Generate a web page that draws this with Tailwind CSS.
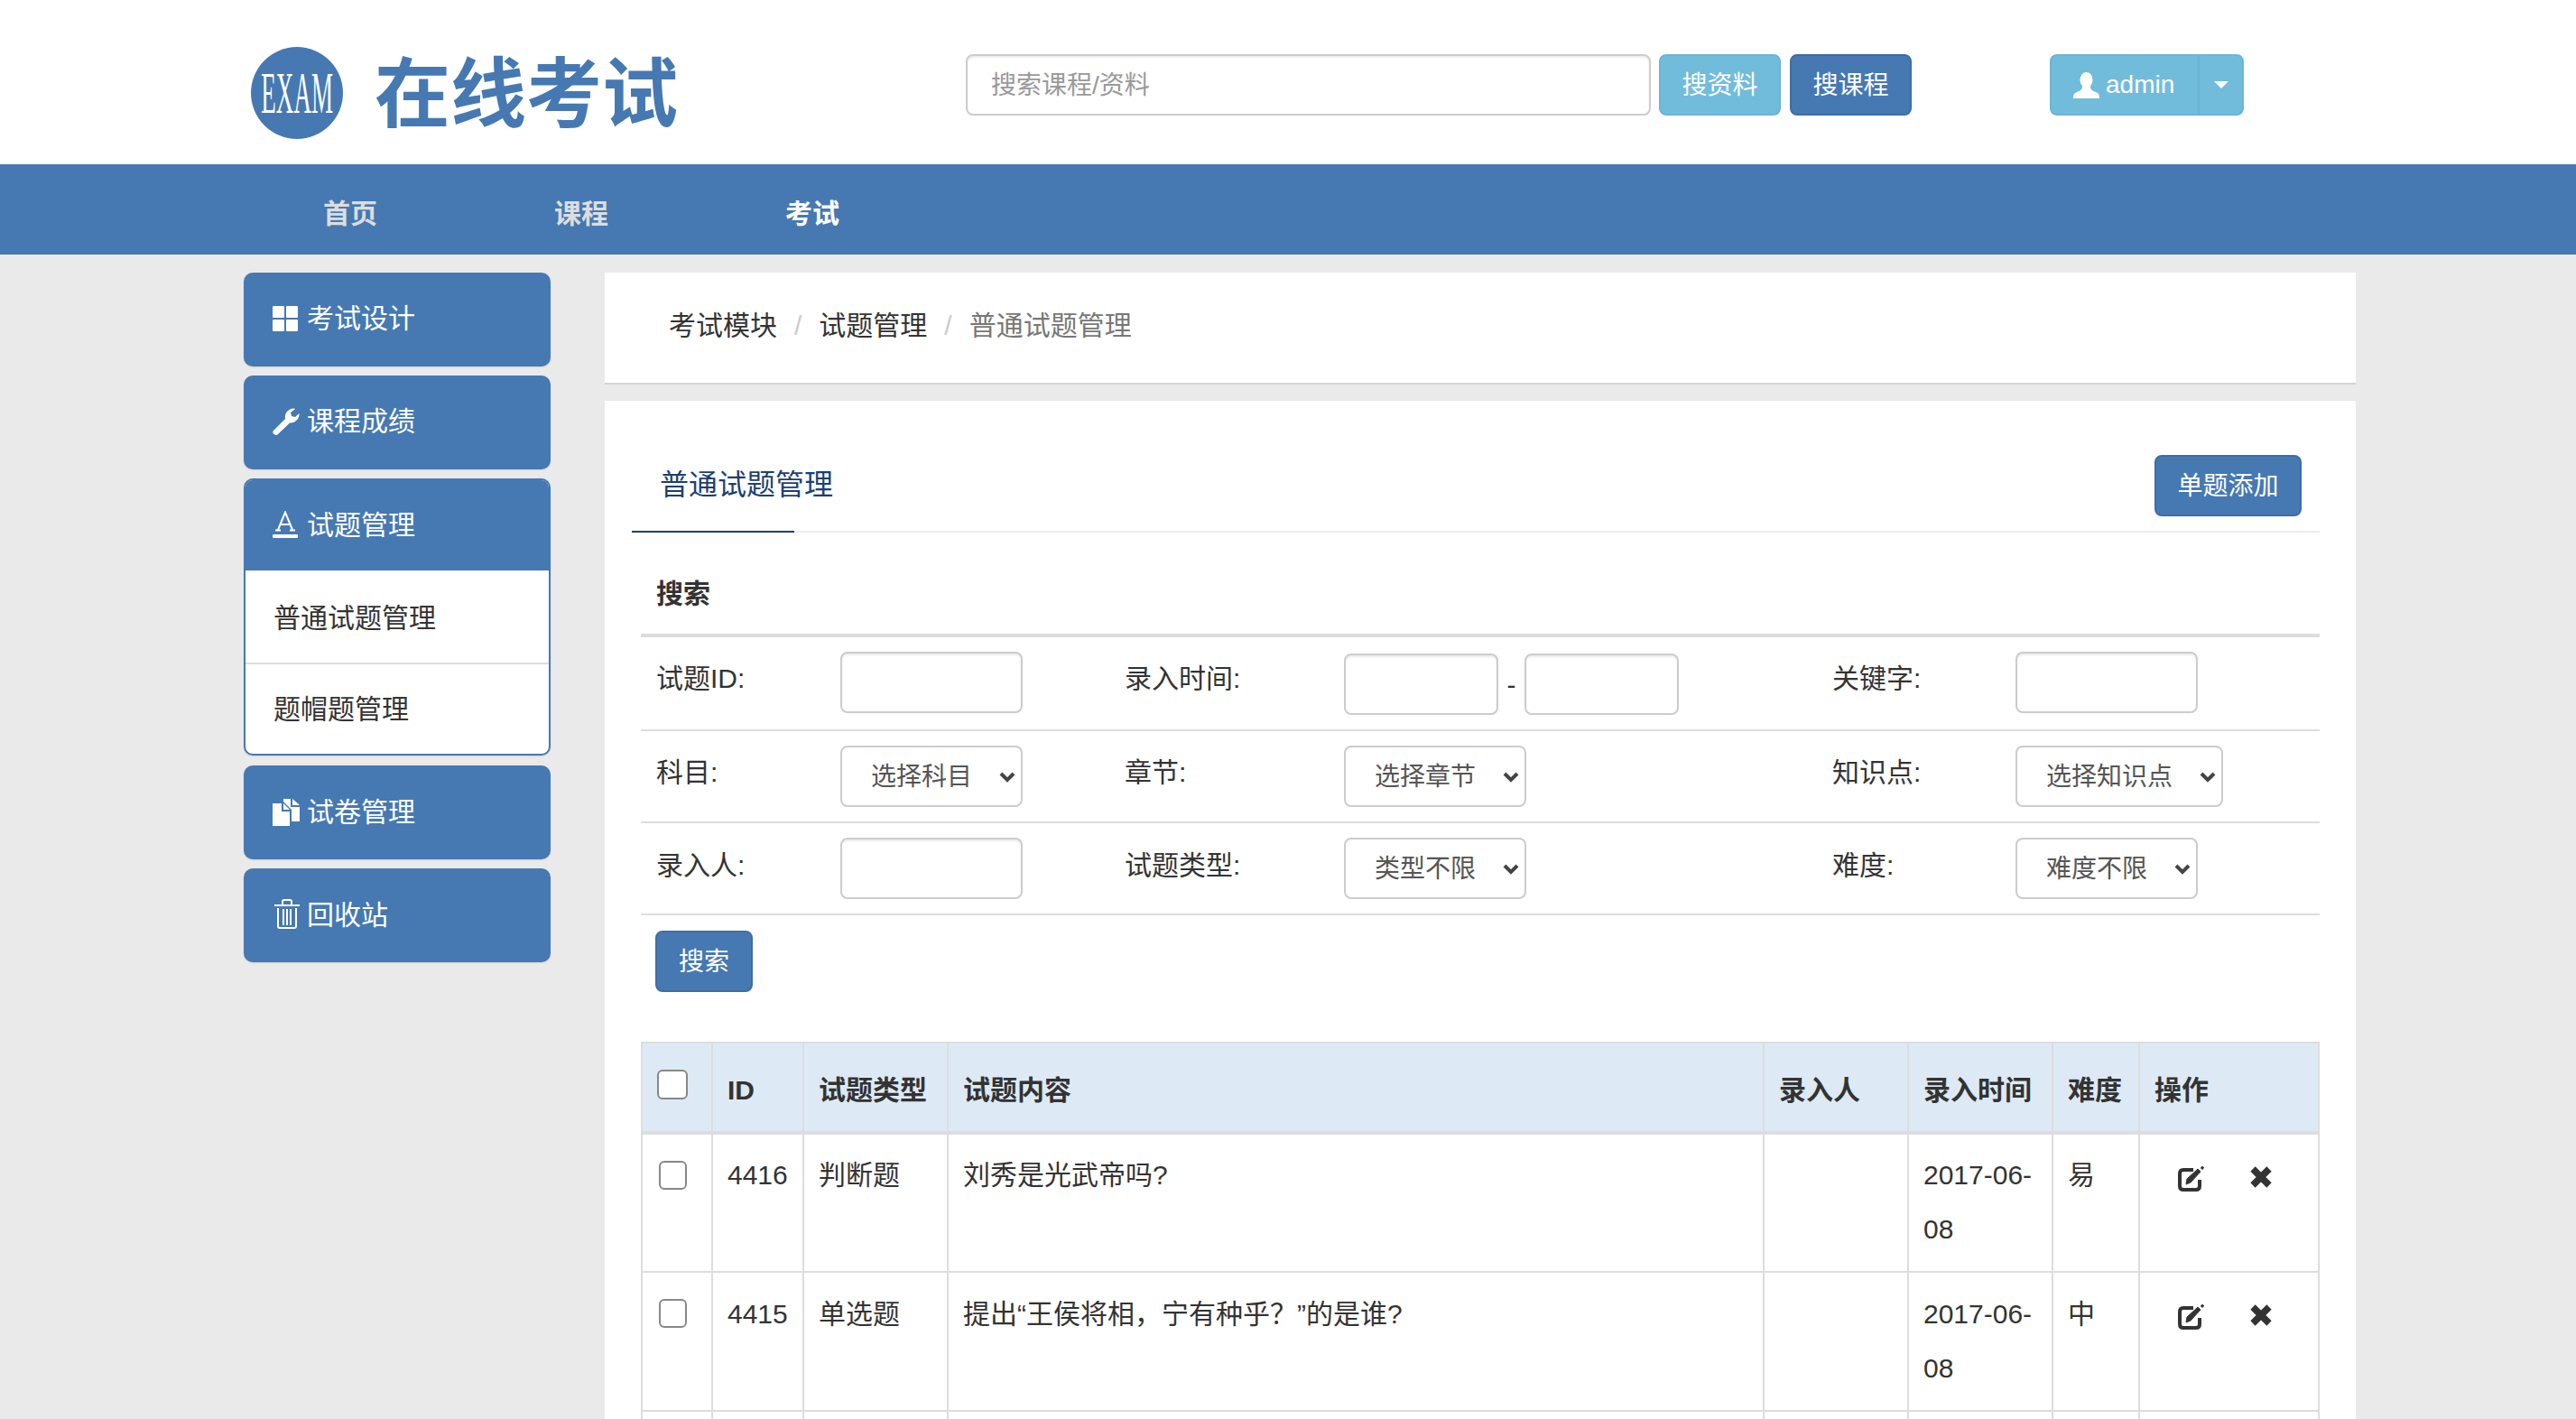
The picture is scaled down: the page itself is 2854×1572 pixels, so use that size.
<!DOCTYPE html>
<html lang="zh-CN">
<head>
  <meta charset="UTF-8" />
  <title>在线考试</title>
  <script src="https://cdn.jsdelivr.net/npm/@tailwindcss/browser@4"></script>
</head>
<body class="w-[2854px] h-[1572px] overflow-hidden bg-[#eaeaea] text-[#333] text-[30px] font-['Liberation_Sans','Noto_Sans_CJK_SC',sans-serif]">

  <!-- header -->
  <header class="h-[182px] bg-white flex items-center pl-[278px]">
    <div class="w-[102px] h-[102px] mt-[24px] rounded-full bg-[#4679b2] flex items-center justify-center overflow-hidden">
      <span class="text-white text-[66px] leading-none scale-x-[0.41] font-['Liberation_Serif','Noto_Serif',serif]">EXAM</span>
    </div>
    <div class="ml-[35px] w-[336px] mt-[28px] text-[84px] leading-none font-bold text-[#4679b2]">在线考试</div>
    <input type="text" placeholder="搜索课程/资料" class="ml-[319px] mt-[6px] w-[759px] h-[68px] px-[26px] pt-[2px] text-[28px] bg-white border-2 border-[#ccc] rounded-[8px] shadow-[inset_0_2px_2px_rgba(0,0,0,0.075)] placeholder:text-[#999]" />
    <button class="ml-[9px] mt-[6px] w-[135px] h-[68px] pt-[2px] rounded-[8px] border-2 border-[#6ab5d7] bg-[#72bcdb] text-white text-[28px]">搜资料</button>
    <button class="ml-[10px] mt-[6px] w-[135px] h-[68px] pt-[2px] rounded-[8px] border-2 border-[#3f6da3] bg-[#4679b2] text-white text-[28px]">搜课程</button>
    <div class="ml-[153px] mt-[6px] flex h-[68px] text-white text-[28px]">
      <button class="w-[164px] flex items-center pl-[24px] rounded-l-[8px] border-2 border-r-0 border-[#6ab5d7] bg-[#72bcdb]">
        <svg class="w-[29px] h-[29px] mr-[7px]" viewBox="0 0 29 29" fill="#fff"><ellipse cx="14.5" cy="8.5" rx="7" ry="8.5"/><path d="M10 15 C10 19 9 20 4 22 C1 23 0 25 0 29 H29 C29 25 28 23 25 22 C20 20 19 19 19 15 Z"/></svg>
        <span>admin</span>
      </button>
      <button class="w-[51px] flex items-center justify-center rounded-r-[8px] border-2 border-[#6ab5d7] bg-[#72bcdb]">
        <svg class="w-[16px] h-[8px]" viewBox="0 0 16 8" fill="#fff"><path d="M0 0 H16 L8 8 Z"/></svg>
      </button>
    </div>
  </header>

  <!-- nav -->
  <nav class="h-[100px] pt-[8px] bg-[#4679b2] flex items-center pl-[260px] text-[30px] font-bold">
    <a class="w-[256px] text-center text-[#ddd]">首页</a>
    <a class="w-[256px] text-center text-[#ddd]">课程</a>
    <a class="w-[256px] text-center text-white">考试</a>
  </nav>

  <div class="flex items-start gap-[60px] pl-[270px] pt-[20px]">

    <!-- sidebar -->
    <aside class="w-[340px] flex flex-col gap-[10px]">
      <a class="h-[104px] pl-[32px] pb-[3px] flex items-center rounded-[10px] bg-[#4679b2] text-white shadow-[0_1px_2px_rgba(0,0,0,0.1)]">
        <svg class="w-[28px] h-[28px] mr-[10px]" viewBox="0 0 28 28" fill="#fff"><rect width="13" height="13" rx="1"/><rect x="15" width="13" height="13" rx="1"/><rect y="15" width="13" height="13" rx="1"/><rect x="15" y="15" width="13" height="13" rx="1"/></svg>
        考试设计
      </a>
      <a class="h-[104px] pl-[32px] pb-[3px] flex items-center rounded-[10px] bg-[#4679b2] text-white shadow-[0_1px_2px_rgba(0,0,0,0.1)]">
        <svg class="w-[30px] h-[30px] mr-[8px]" viewBox="0 0 30 30" fill="#fff"><path d="M1 25 L14 12 C13 6 17 1 23 0.5 C24 0.5 25 1 25 1 L20 5 L21 9 L25 10 L29.5 6 C30 12 25 17 19 16.5 L6 29 C4.5 30.5 2.5 30 1 28.5 C0 27.5 0 26 1 25 Z"/></svg>
        课程成绩
      </a>
      <div class="rounded-[10px] border-2 border-[#4679b2] bg-white shadow-[0_1px_2px_rgba(0,0,0,0.1)] overflow-hidden">
        <a class="h-[100px] pl-[30px] pb-[2px] flex items-center bg-[#4679b2] text-white">
          <svg class="w-[28px] h-[30px] mr-[10px]" viewBox="0 0 28 30"><path d="M6 21 L14 1.5 L22 21 M8.5 15 H19.5 M3 21.5 H9 M19 21.5 H25" fill="none" stroke="#fff" stroke-width="2"/><rect y="26" width="28" height="4" rx="1" fill="#fff"/></svg>
          试题管理
        </a>
        <a class="h-[104px] pl-[31px] pt-[2px] flex items-center border-b-2 border-[#ddd] text-[#333]">普通试题管理</a>
        <a class="h-[99px] pl-[31px] flex items-center text-[#333]">题帽题管理</a>
      </div>
      <a class="h-[104px] mt-[1px] pl-[32px] pb-[1px] flex items-center rounded-[10px] bg-[#4679b2] text-white shadow-[0_1px_2px_rgba(0,0,0,0.1)]">
        <svg class="w-[30px] h-[30px] mr-[8px]" viewBox="0 0 30 30" fill="#fff"><path d="M0 5 H10 V14 H19 V30 H0 Z"/><path d="M12 5 L19 12 H12 Z"/><path d="M12 0 H20 V9 H30 V25 H21 V12 L12 3 Z"/><path d="M22 0 L30 7 H22 Z"/></svg>
        试卷管理
      </a>
      <a class="h-[104px] pl-[32px] pb-[1px] flex items-center rounded-[10px] bg-[#4679b2] text-white shadow-[0_1px_2px_rgba(0,0,0,0.1)]">
        <svg class="w-[28px] h-[33px] ml-[2px] mr-[8px] -mt-[2px]" viewBox="0 0 28 33" fill="none" stroke="#fff" stroke-width="2"><path d="M0 7 H28 M9 6 V3 C9 1.5 10 1 11 1 H17 C18 1 19 1.5 19 3 V6 M4 10 V30 C4 31.5 5 32 6 32 H22 C23 32 24 31.5 24 30 V10 M10 11 V29 M14 11 V29 M18 11 V29"/></svg>
        回收站
      </a>
    </aside>

    <!-- main -->
    <main class="w-[1940px]">
      <div class="h-[124px] pl-[71px] pb-[6px] flex items-center bg-white border-b-2 border-[#d5d5d5]">
        <span>考试模块</span>
        <span class="px-[19px] text-[#ccc]">/</span>
        <span>试题管理</span>
        <span class="px-[19px] text-[#ccc]">/</span>
        <span class="text-[#777]">普通试题管理</span>
      </div>

      <div class="mt-[18px] bg-white h-[1128px] overflow-hidden">
        <div class="relative ml-[30px] mr-[40px] h-[146px] flex justify-between items-end border-b-2 border-[#eee]">
          <div class="w-[180px] h-[146px] pl-[31px] pt-[71px] -mb-[2px] border-b-2 border-[#1c3f72] text-[#1c3f72] text-[32px] leading-[44px] whitespace-nowrap">普通试题管理</div>
          <button class="absolute right-[20px] top-[60px] w-[163px] h-[68px] pt-[2px] rounded-[8px] border-2 border-[#3f6da3] bg-[#4679b2] text-white text-[28px]">单题添加</button>
        </div>

        <div class="mx-[40px]">
          <div class="h-[116px] pl-[17px] pt-[47px] leading-[42px] font-bold border-b-4 border-[#ddd]">搜索</div>

          <div class="h-[104px] pl-[17px] pt-[16px] grid grid-cols-[204px_315px_243px_541px_203px_1fr] items-start border-b-2 border-[#ddd]">
            <label class="mt-[9px] leading-[42px]">试题ID:</label>
            <input type="text" class="w-[202px] h-[68px] bg-white border-2 border-[#ccc] rounded-[8px] shadow-[inset_0_2px_2px_rgba(0,0,0,0.075)]" />
            <label class="mt-[9px] leading-[42px]">录入时间:</label>
            <div class="mt-[2px] flex items-center">
              <input type="text" class="w-[171px] h-[68px] bg-white border-2 border-[#ccc] rounded-[8px] shadow-[inset_0_2px_2px_rgba(0,0,0,0.075)]" />
              <span class="w-[29px] text-center">-</span>
              <input type="text" class="w-[171px] h-[68px] bg-white border-2 border-[#ccc] rounded-[8px] shadow-[inset_0_2px_2px_rgba(0,0,0,0.075)]" />
            </div>
            <label class="mt-[9px] leading-[42px]">关键字:</label>
            <input type="text" class="w-[202px] h-[68px] bg-white border-2 border-[#ccc] rounded-[8px] shadow-[inset_0_2px_2px_rgba(0,0,0,0.075)]" />
          </div>

          <div class="h-[102px] pl-[17px] pt-[16px] grid grid-cols-[204px_315px_243px_541px_203px_1fr] items-start border-b-2 border-[#ddd]">
            <label class="mt-[9px] leading-[42px]">科目:</label>
            <div class="relative w-[202px]">
              <select class="appearance-none w-full h-[68px] pl-[32px] pt-[2px] text-[28px] text-[#555] bg-white border-2 border-[#ccc] rounded-[8px]"><option>选择科目</option></select>
              <svg class="absolute right-[8px] top-[29px] w-[18px] h-[12px] pointer-events-none" viewBox="0 0 18 12" fill="none" stroke="#444" stroke-width="4"><path d="M2 2 L9 9 L16 2"/></svg>
            </div>
            <label class="mt-[9px] leading-[42px]">章节:</label>
            <div class="relative w-[202px]">
              <select class="appearance-none w-full h-[68px] pl-[32px] pt-[2px] text-[28px] text-[#555] bg-white border-2 border-[#ccc] rounded-[8px]"><option>选择章节</option></select>
              <svg class="absolute right-[8px] top-[29px] w-[18px] h-[12px] pointer-events-none" viewBox="0 0 18 12" fill="none" stroke="#444" stroke-width="4"><path d="M2 2 L9 9 L16 2"/></svg>
            </div>
            <label class="mt-[9px] leading-[42px]">知识点:</label>
            <div class="relative w-[230px]">
              <select class="appearance-none w-full h-[68px] pl-[32px] pt-[2px] text-[28px] text-[#555] bg-white border-2 border-[#ccc] rounded-[8px]"><option>选择知识点</option></select>
              <svg class="absolute right-[8px] top-[29px] w-[18px] h-[12px] pointer-events-none" viewBox="0 0 18 12" fill="none" stroke="#444" stroke-width="4"><path d="M2 2 L9 9 L16 2"/></svg>
            </div>
          </div>

          <div class="h-[102px] pl-[17px] pt-[16px] grid grid-cols-[204px_315px_243px_541px_203px_1fr] items-start border-b-2 border-[#ddd]">
            <label class="mt-[10px] leading-[42px]">录入人:</label>
            <input type="text" class="w-[202px] h-[68px] bg-white border-2 border-[#ccc] rounded-[8px] shadow-[inset_0_2px_2px_rgba(0,0,0,0.075)]" />
            <label class="mt-[10px] leading-[42px]">试题类型:</label>
            <div class="relative w-[202px]">
              <select class="appearance-none w-full h-[68px] pl-[32px] pt-[2px] text-[28px] text-[#555] bg-white border-2 border-[#ccc] rounded-[8px]"><option>类型不限</option></select>
              <svg class="absolute right-[8px] top-[29px] w-[18px] h-[12px] pointer-events-none" viewBox="0 0 18 12" fill="none" stroke="#444" stroke-width="4"><path d="M2 2 L9 9 L16 2"/></svg>
            </div>
            <label class="mt-[10px] leading-[42px]">难度:</label>
            <div class="relative w-[202px]">
              <select class="appearance-none w-full h-[68px] pl-[32px] pt-[2px] text-[28px] text-[#555] bg-white border-2 border-[#ccc] rounded-[8px]"><option>难度不限</option></select>
              <svg class="absolute right-[8px] top-[29px] w-[18px] h-[12px] pointer-events-none" viewBox="0 0 18 12" fill="none" stroke="#444" stroke-width="4"><path d="M2 2 L9 9 L16 2"/></svg>
            </div>
          </div>

          <button class="ml-[16px] mt-[17px] w-[108px] h-[68px] pt-[2px] rounded-[8px] border-2 border-[#3f6da3] bg-[#4679b2] text-white text-[28px]">搜索</button>

          <table class="mt-[55px] w-[1860px] table-fixed border-collapse leading-[60px]">
            <colgroup>
              <col class="w-[78px]" /><col class="w-[101px]" /><col class="w-[160px]" /><col class="w-[904px]" /><col class="w-[160px]" /><col class="w-[160px]" /><col class="w-[96px]" /><col />
            </colgroup>
            <thead>
              <tr class="h-[100px] bg-[#ddeaf6]">
                <th class="border-2 border-b-4 border-[#ddd] align-top pl-[16px] pt-[29px] text-left"><input type="checkbox" class="block appearance-none w-[34px] h-[33px] bg-white border-2 border-[#888] rounded-[6px]" /></th>
                <th class="border-2 border-b-4 border-[#ddd] align-bottom px-[16px] pb-[15px] text-left">ID</th>
                <th class="border-2 border-b-4 border-[#ddd] align-bottom px-[16px] pb-[15px] text-left">试题类型</th>
                <th class="border-2 border-b-4 border-[#ddd] align-bottom px-[16px] pb-[15px] text-left">试题内容</th>
                <th class="border-2 border-b-4 border-[#ddd] align-bottom px-[16px] pb-[15px] text-left">录入人</th>
                <th class="border-2 border-b-4 border-[#ddd] align-bottom px-[16px] pb-[15px] text-left">录入时间</th>
                <th class="border-2 border-b-4 border-[#ddd] align-bottom px-[16px] pb-[15px] text-left">难度</th>
                <th class="border-2 border-b-4 border-[#ddd] align-bottom px-[16px] pb-[15px] text-left">操作</th>
              </tr>
            </thead>
            <tbody>
              <tr class="h-[154px]">
                <td class="border-2 border-[#ddd] align-top pl-[18px] pt-[29px]"><input type="checkbox" class="block appearance-none w-[31px] h-[32px] bg-white border-2 border-[#888] rounded-[6px]" /></td>
                <td class="border-2 border-[#ddd] align-top px-[16px] py-[15px]">4416</td>
                <td class="border-2 border-[#ddd] align-top px-[16px] py-[15px]">判断题</td>
                <td class="border-2 border-[#ddd] align-top px-[16px] py-[15px]">刘秀是光武帝吗?</td>
                <td class="border-2 border-[#ddd] align-top px-[16px] py-[15px]"></td>
                <td class="border-2 border-[#ddd] align-top px-[16px] py-[15px]">2017-06-08</td>
                <td class="border-2 border-[#ddd] align-top px-[16px] py-[15px]">易</td>
                <td class="border-2 border-[#ddd] align-top pl-[42px] pt-[35px]">
                  <div class="flex items-start gap-[50px]">
                    <svg class="w-[29px] h-[28px]" viewBox="0 0 29 28" fill="none" stroke="#333"><path d="M17 4 H6 C3.5 4 2 5.5 2 8 V22 C2 24.5 3.5 26 6 26 H20 C22.5 26 24 24.5 24 22 V15" stroke-width="4"/><path d="M9 20 L10 14 L22 3 L25 6 L14 18 Z" fill="#333" stroke-width="1"/><path d="M26 3 L28 0.5" stroke-width="3"/></svg>
                    <svg class="w-[26px] h-[24px]" viewBox="0 0 26 24" fill="none" stroke="#333" stroke-width="7.5"><path d="M4 3 L22 21 M22 3 L4 21"/></svg>
                  </div>
                </td>
              </tr>
              <tr class="h-[154px]">
                <td class="border-2 border-[#ddd] align-top pl-[18px] pt-[29px]"><input type="checkbox" class="block appearance-none w-[31px] h-[32px] bg-white border-2 border-[#888] rounded-[6px]" /></td>
                <td class="border-2 border-[#ddd] align-top px-[16px] pt-[16px] pb-[14px]">4415</td>
                <td class="border-2 border-[#ddd] align-top px-[16px] pt-[16px] pb-[14px]">单选题</td>
                <td class="border-2 border-[#ddd] align-top px-[16px] pt-[16px] pb-[14px]">提出“王侯将相，宁有种乎？”的是谁?</td>
                <td class="border-2 border-[#ddd] align-top px-[16px] pt-[16px] pb-[14px]"></td>
                <td class="border-2 border-[#ddd] align-top px-[16px] pt-[16px] pb-[14px]">2017-06-08</td>
                <td class="border-2 border-[#ddd] align-top px-[16px] pt-[16px] pb-[14px]">中</td>
                <td class="border-2 border-[#ddd] align-top pl-[42px] pt-[35px]">
                  <div class="flex items-start gap-[50px]">
                    <svg class="w-[29px] h-[28px]" viewBox="0 0 29 28" fill="none" stroke="#333"><path d="M17 4 H6 C3.5 4 2 5.5 2 8 V22 C2 24.5 3.5 26 6 26 H20 C22.5 26 24 24.5 24 22 V15" stroke-width="4"/><path d="M9 20 L10 14 L22 3 L25 6 L14 18 Z" fill="#333" stroke-width="1"/><path d="M26 3 L28 0.5" stroke-width="3"/></svg>
                    <svg class="w-[26px] h-[24px]" viewBox="0 0 26 24" fill="none" stroke="#333" stroke-width="7.5"><path d="M4 3 L22 21 M22 3 L4 21"/></svg>
                  </div>
                </td>
              </tr>
              <tr class="h-[152px]">
                <td class="border-2 border-[#ddd]"></td><td class="border-2 border-[#ddd]"></td><td class="border-2 border-[#ddd]"></td><td class="border-2 border-[#ddd]"></td><td class="border-2 border-[#ddd]"></td><td class="border-2 border-[#ddd]"></td><td class="border-2 border-[#ddd]"></td><td class="border-2 border-[#ddd]"></td>
              </tr>
            </tbody>
          </table>
        </div>
      </div>
    </main>
  </div>
</body>
</html>
